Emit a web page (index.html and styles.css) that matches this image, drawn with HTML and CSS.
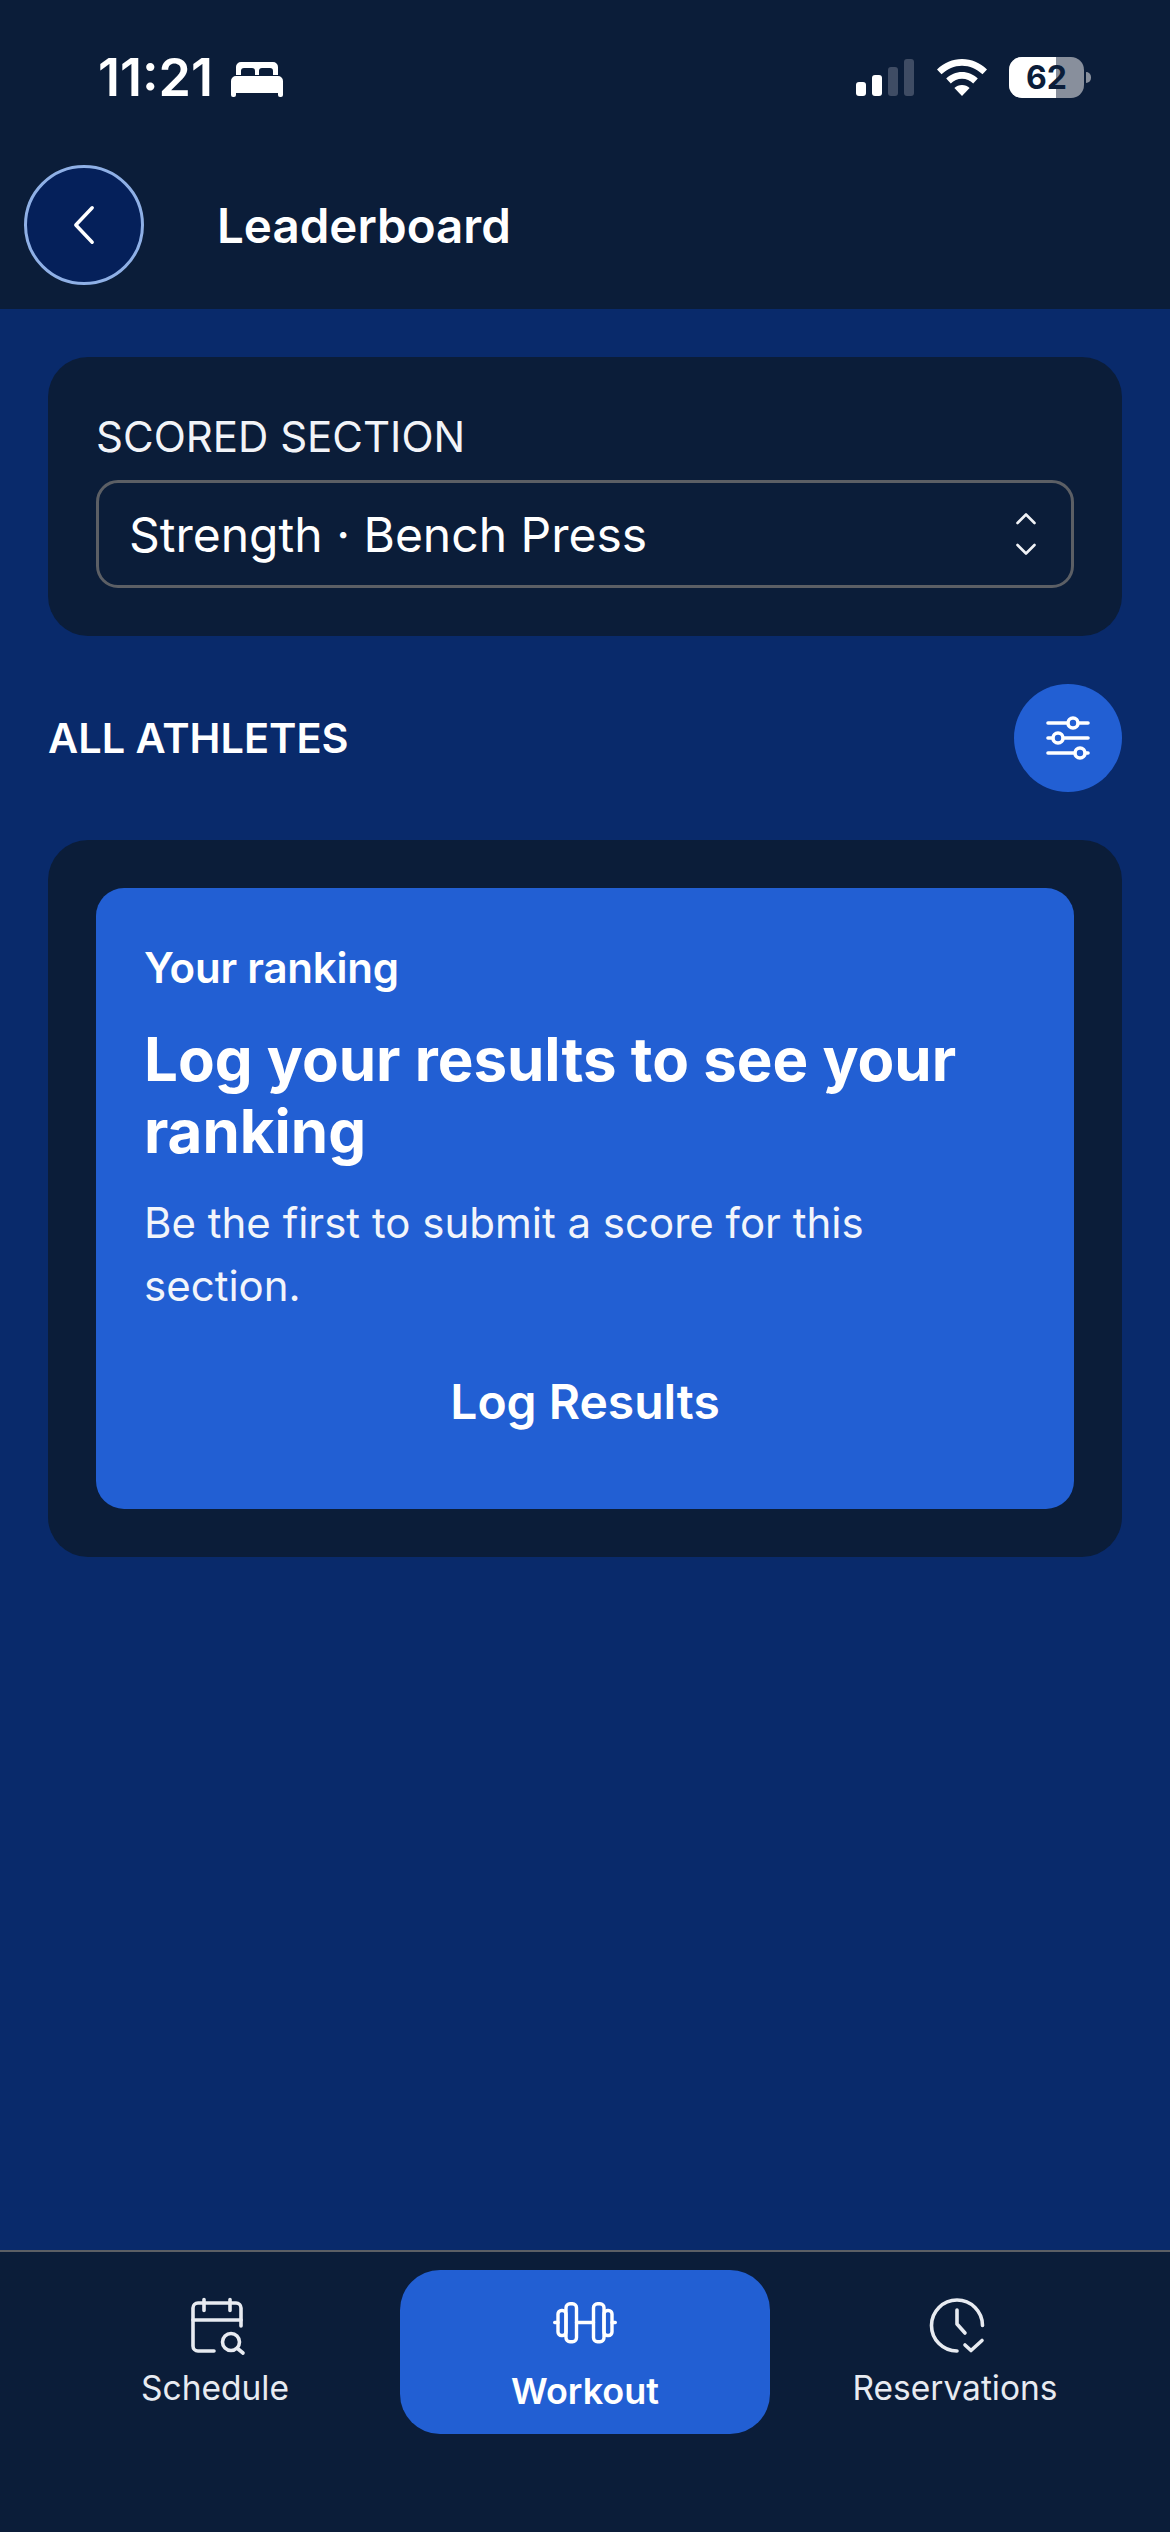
FILE: index.html
```html
<!DOCTYPE html>
<html lang="en">
<head>
<meta charset="utf-8">
<title>Leaderboard</title>
<link rel="stylesheet" href="styles.css">
</head>
<body>
<div class="app">
  <header class="top">
    <div class="status">
      <div class="status-left">
        <span class="time">11:21</span>
        <svg class="bed" viewBox="0 0 52 35"><path fill="#fff" d="M5 13V5a5 5 0 0 1 5-5h32a5 5 0 0 1 5 5v8h-5V9a3 3 0 0 0-3-3h-8a3 3 0 0 0-3 3v4h-4V9a3 3 0 0 0-3-3h-8a3 3 0 0 0-3 3v4z"/><path fill="#fff" d="M0 19a5 5 0 0 1 5-5h42a5 5 0 0 1 5 5v14a2 2 0 0 1-2 2h-1a2 2 0 0 1-2-2v-2H5v2a2 2 0 0 1-2 2H2a2 2 0 0 1-2-2z"/></svg>
      </div>
      <div class="status-right">
        <svg class="signal" viewBox="0 0 58 37"><rect x="0" y="23" width="10" height="14" rx="3" fill="#fff"/><rect x="16" y="16" width="10" height="21" rx="3" fill="#fff"/><rect x="32" y="8" width="10" height="29" rx="3" fill="#3f4c64"/><rect x="48" y="0" width="10" height="37" rx="3" fill="#3f4c64"/></svg>
        <svg class="wifi" viewBox="0 0 50 37"><path fill="#fff" d="M25 0C15.500 0 7 3.800 0 10.500l4.500 4.800C10.300 9.800 17.300 6.700 25 6.700s14.700 3.100 20.500 8.600l4.500-4.800C43 3.800 34.500 0 25 0z"/><path fill="#fff" d="M25 13c-6 0-11.500 2.400-15.800 6.600l4.600 4.800c3-3 6.900-4.700 11.200-4.700s8.200 1.700 11.200 4.700l4.600-4.800C36.500 15.400 31 13 25 13z"/><path fill="#fff" d="M25 26c-3 0-5.600 1.200-7.600 3.100L25 37l7.600-7.900C30.600 27.200 28 26 25 26z"/></svg>
        <div class="battery"><span class="battery-fill"></span><span class="battery-num">62</span><span class="battery-cap"></span></div>
      </div>
    </div>
    <div class="nav">
      <button class="back" type="button" aria-label="Back">
        <svg viewBox="0 0 24 44" class="back-icon"><path d="M21 3 3 22l18 19" fill="none" stroke="#fff" stroke-width="3.800" stroke-linecap="round" stroke-linejoin="round"/></svg>
      </button>
      <h1 class="title">Leaderboard</h1>
    </div>
  </header>

  <main class="content">
    <section class="card picker">
      <div class="picker-label">SCORED SECTION</div>
      <div class="select">
        <span class="select-value">Strength · Bench Press</span>
        <svg class="updown" viewBox="0 0 20 42"><path d="M1.500 10 10 1.500l8.500 8.500M1.500 32l8.500 8.500 8.500-8.500" fill="none" stroke="#f0f2f6" stroke-width="2.600" stroke-linecap="round" stroke-linejoin="round"/></svg>
      </div>
    </section>

    <div class="section-row">
      <h2 class="section-title">ALL ATHLETES</h2>
      <button class="filter" type="button" aria-label="Filter">
        <svg viewBox="0 0 44 43" class="filter-icon">
          <g stroke="#fff" stroke-width="3.600" stroke-linecap="round" fill="none">
            <path d="M2 6h40M2 21h40M2 36h40"/>
          </g>
          <g stroke="#fff" stroke-width="3.600" fill="#225fd3">
            <circle cx="27" cy="6" r="5"/><circle cx="12" cy="21" r="5"/><circle cx="34" cy="36" r="5"/>
          </g>
        </svg>
      </button>
    </div>

    <section class="card ranking-card">
      <div class="ranking">
        <div class="ranking-kicker">Your ranking</div>
        <div class="ranking-head">Log your results to see your ranking</div>
        <p class="ranking-text">Be the first to submit a score for this section.</p>
        <div class="ranking-action">Log Results</div>
      </div>
    </section>
  </main>

  <footer class="tabs">
    <div class="tab">
      <svg class="tab-icon tab-icon-shift" viewBox="0 0 56 56"><g fill="none" stroke="#e8ebf1" stroke-width="3.600" stroke-linecap="round" stroke-linejoin="round"><path d="M24 53H8a5 5 0 0 1-5-5V10a5 5 0 0 1 5-5h38a5 5 0 0 1 5 5v18"/><path d="M3 22h48"/><path d="M14 1.500v11M40 1.500v11"/><circle cx="41" cy="44" r="8.500"/><path d="m47.500 50.500 5.500 4.500"/></g></svg>
      <span class="tab-label">Schedule</span>
    </div>
    <div class="tab tab-active">
      <svg class="tab-icon" viewBox="0 0 64 41"><g fill="none" stroke="#fff" stroke-width="3.400" stroke-linecap="round" stroke-linejoin="round"><rect x="5" y="8.500" width="8" height="25" rx="3.500"/><rect x="13" y="1.700" width="10.500" height="38" rx="4"/><rect x="40.500" y="1.700" width="10.500" height="38" rx="4"/><rect x="51" y="8.500" width="8" height="25" rx="3.500"/><path d="M23.500 20.500h17M1.700 20.500H5M59 20.500h3.300"/></g></svg>
      <span class="tab-label">Workout</span>
    </div>
    <div class="tab">
      <svg class="tab-icon tab-icon-shift" viewBox="0 0 56 56"><g fill="none" stroke="#e8ebf1" stroke-width="3.600" stroke-linecap="round" stroke-linejoin="round"><path d="M27 53a25.500 25.500 0 1 1 25.500-25.500"/><path d="M27 12v14l8 9"/><path d="m35 47 6 5.500 11-10"/></g></svg>
      <span class="tab-label">Reservations</span>
    </div>
  </footer>
</div>
</body>
</html>
```
FILE: styles.css
```css
* { box-sizing: border-box; }
html, body { margin: 0; padding: 0; }
body { font-family: Inter, "Liberation Sans", sans-serif; color: #fff; background: #092a6b; }
button { padding: 0; font: inherit; color: inherit; }

.app { width: 1170px; height: 2532px; display: flex; flex-direction: column; overflow: hidden; background: #092a6b; }

.top { height: 309px; flex: none; background: #0b1d39; padding: 0 0 0 24px; display: flex; flex-direction: column; }

.status { height: 165px; flex: none; display: flex; justify-content: space-between; align-items: flex-start; padding: 57px 86px 0 74px; }
.status-left { display: flex; align-items: center; gap: 18px; height: 41px; }
.time { font-size: 52px; font-weight: 600; line-height: 41px; letter-spacing: 0; }
.bed { width: 52px; height: 35px; display: block; margin-top: 4px; }
.status-right { display: flex; align-items: center; height: 41px; }
.signal { width: 58px; height: 37px; display: block; }
.wifi { width: 50px; height: 37px; display: block; margin-left: 23px; }
.battery { position: relative; width: 75px; height: 41px; margin-left: 22px; border-radius: 13px; background: #888f9c; display: flex; align-items: center; justify-content: center; }
.battery-fill { position: absolute; left: 0; top: 0; bottom: 0; width: 47px; background: #fff; border-radius: 13px 0 0 13px; }
.battery-num { position: relative; font-size: 32px; font-weight: 700; color: #0b1d39; line-height: 41px; }
.battery-cap { position: absolute; left: 77px; top: 15px; width: 5px; height: 11px; background: #888f9c; border-radius: 0 5px 5px 0; }

.nav { display: flex; align-items: center; gap: 73px; }
.back { width: 120px; height: 120px; border-radius: 50%; border: 3px solid #8fb0e6; background: #05205a; display: flex; align-items: center; justify-content: center; }
.back-icon { width: 22px; height: 40px; display: block; }
.title { margin: 2px 0 0; font-size: 47.500px; font-weight: 600; line-height: 56px; }

.content { flex: 1; padding: 48px 48px 0; display: flex; flex-direction: column; }
.card { background: #0b1d39; border-radius: 40px; padding: 48px; }
.picker { height: 279px; }
.picker-label { font-size: 42px; font-weight: 400; line-height: 48px; color: #f2f4f8; margin-top: 8px; white-space: nowrap; }
.select { margin-top: 19px; height: 108px; border: 3px solid #5c5f65; border-radius: 22px; display: flex; align-items: center; justify-content: space-between; padding: 0 35px 0 30px; }
.select-value { font-size: 48px; line-height: 60px; padding-top: 2px; }
.updown { width: 20px; height: 42px; display: block; }

.section-row { display: flex; justify-content: space-between; align-items: center; margin-top: 48px; }
.section-title { margin: 0; font-size: 41.500px; font-weight: 600; line-height: 50px; }
.filter { width: 108px; height: 108px; border-radius: 50%; border: none; background: #225fd3; display: flex; align-items: center; justify-content: center; }
.filter-icon { width: 44px; height: 43px; display: block; overflow: visible; }

.ranking-card { margin-top: 48px; }
.ranking { background: #225fd3; border-radius: 28px; padding: 55px 48px 48px; height: 621px; }
.ranking-kicker { font-size: 42px; font-weight: 600; line-height: 50px; letter-spacing: -0.2px; }
.ranking-head { margin-top: 30px; font-size: 60px; font-weight: 700; line-height: 72px; }
.ranking-text { margin: 24px 0 0; font-size: 42px; font-weight: 400; line-height: 63px; color: #f2f5fb; }
.ranking-action { margin-top: 55px; text-align: center; font-size: 48px; font-weight: 600; line-height: 60px; }

.tabs { height: 282px; flex: none; background: #0b1d39; border-top: 2px solid #5c5f65; padding: 18px 0 0; display: flex; justify-content: center; align-items: flex-start; }
.tab { width: 370px; height: 164px; padding-top: 28px; display: flex; flex-direction: column; align-items: center; gap: 13px; color: #e8ebf1; }
.tab-active { background: #225fd3; border-radius: 40px; color: #fff; padding-top: 32px; gap: 27px; }
.tab-icon { width: 56px; height: 56px; display: block; overflow: visible; }
.tab-icon-shift { margin-left: 6px; }
.tab-active .tab-icon { width: 64px; height: 41px; }
.tab-label { font-size: 33.500px; line-height: 42px; }
.tab-active .tab-label { font-size: 36px; font-weight: 600; color: #fff; }
```
